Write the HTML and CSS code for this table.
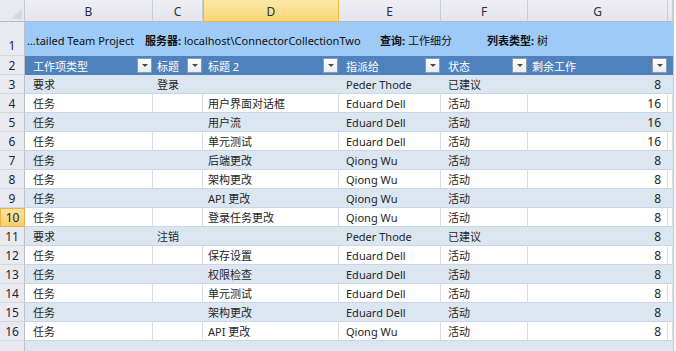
FILE: index.html
```html
<!DOCTYPE html>
<html>
<head>
<meta charset="utf-8">
<link rel="stylesheet" href="styles.css">
</head>
<body>
<div class="sheet">
  <div class="row colhdr">
    <div class="corner"><span class="tri"></span></div>
    <div class="ch">B</div>
    <div class="ch">C</div>
    <div class="ch sel">D</div>
    <div class="ch">E</div>
    <div class="ch">F</div>
    <div class="ch">G</div>
    <div class="ch"></div>
    <div class="edge"></div>
  </div>

  <div class="row r1">
    <div class="rh rh1">1</div>
    <div class="banner">
      <span>…tailed Team Project</span>
      <span><b>服务器:</b> localhost\ConnectorCollectionTwo</span>
      <span><b>查询:</b> 工作细分</span>
      <span><b>列表类型:</b> 树</span>
    </div>
    <div class="edge"></div>
  </div>

  <div class="row r2">
    <div class="rh">2</div>
    <div class="th pb">工作项类型<span class="dd"></span></div>
    <div class="th pc">标题<span class="dd"></span></div>
    <div class="th pd">标题 2<span class="dd"></span></div>
    <div class="th pe">指派给<span class="dd"></span></div>
    <div class="th pf">状态<span class="dd"></span></div>
    <div class="th pg">剩余工作<span class="dd"></span></div>
    <div class="th"></div>
    <div class="edge"></div>
  </div>

  <div class="row data band">
    <div class="rh">3</div><div class="td pb">要求</div><div class="td pc over">登录</div><div class="td pd"></div><div class="td pe">Peder Thode</div><div class="td pf">已建议</div><div class="td num">8</div><div class="td"></div><div class="edge"></div>
  </div>
  <div class="row data">
    <div class="rh">4</div><div class="td pb">任务</div><div class="td pc"></div><div class="td pd">用户界面对话框</div><div class="td pe">Eduard Dell</div><div class="td pf">活动</div><div class="td num">16</div><div class="td"></div><div class="edge"></div>
  </div>
  <div class="row data band">
    <div class="rh">5</div><div class="td pb">任务</div><div class="td pc"></div><div class="td pd">用户流</div><div class="td pe">Eduard Dell</div><div class="td pf">活动</div><div class="td num">16</div><div class="td"></div><div class="edge"></div>
  </div>
  <div class="row data">
    <div class="rh">6</div><div class="td pb">任务</div><div class="td pc"></div><div class="td pd">单元测试</div><div class="td pe">Eduard Dell</div><div class="td pf">活动</div><div class="td num">16</div><div class="td"></div><div class="edge"></div>
  </div>
  <div class="row data band">
    <div class="rh">7</div><div class="td pb">任务</div><div class="td pc"></div><div class="td pd">后端更改</div><div class="td pe">Qiong Wu</div><div class="td pf">活动</div><div class="td num">8</div><div class="td"></div><div class="edge"></div>
  </div>
  <div class="row data">
    <div class="rh">8</div><div class="td pb">任务</div><div class="td pc"></div><div class="td pd">架构更改</div><div class="td pe">Qiong Wu</div><div class="td pf">活动</div><div class="td num">8</div><div class="td"></div><div class="edge"></div>
  </div>
  <div class="row data band">
    <div class="rh">9</div><div class="td pb">任务</div><div class="td pc"></div><div class="td pd">API 更改</div><div class="td pe">Qiong Wu</div><div class="td pf">活动</div><div class="td num">8</div><div class="td"></div><div class="edge"></div>
  </div>
  <div class="row data">
    <div class="rh rsel">10</div><div class="td pb">任务</div><div class="td pc"></div><div class="td pd">登录任务更改</div><div class="td pe">Qiong Wu</div><div class="td pf">活动</div><div class="td num">8</div><div class="td"></div><div class="edge"></div>
  </div>
  <div class="row data band">
    <div class="rh">11</div><div class="td pb">要求</div><div class="td pc over">注销</div><div class="td pd"></div><div class="td pe">Peder Thode</div><div class="td pf">已建议</div><div class="td num">8</div><div class="td"></div><div class="edge"></div>
  </div>
  <div class="row data">
    <div class="rh">12</div><div class="td pb">任务</div><div class="td pc"></div><div class="td pd">保存设置</div><div class="td pe">Eduard Dell</div><div class="td pf">活动</div><div class="td num">8</div><div class="td"></div><div class="edge"></div>
  </div>
  <div class="row data band">
    <div class="rh">13</div><div class="td pb">任务</div><div class="td pc"></div><div class="td pd">权限检查</div><div class="td pe">Eduard Dell</div><div class="td pf">活动</div><div class="td num">8</div><div class="td"></div><div class="edge"></div>
  </div>
  <div class="row data">
    <div class="rh">14</div><div class="td pb">任务</div><div class="td pc"></div><div class="td pd">单元测试</div><div class="td pe">Eduard Dell</div><div class="td pf">活动</div><div class="td num">8</div><div class="td"></div><div class="edge"></div>
  </div>
  <div class="row data band">
    <div class="rh">15</div><div class="td pb">任务</div><div class="td pc"></div><div class="td pd">架构更改</div><div class="td pe">Eduard Dell</div><div class="td pf">活动</div><div class="td num">8</div><div class="td"></div><div class="edge"></div>
  </div>
  <div class="row data">
    <div class="rh">16</div><div class="td pb">任务</div><div class="td pc"></div><div class="td pd">API 更改</div><div class="td pe">Qiong Wu</div><div class="td pf">活动</div><div class="td num">8</div><div class="td"></div><div class="edge"></div>
  </div>
  <div class="row data band last">
    <div class="rh"></div><div class="td"></div><div class="td"></div><div class="td"></div><div class="td"></div><div class="td"></div><div class="td"></div><div class="td"></div><div class="edge"></div>
  </div>
</div>
</body>
</html>
```

FILE: styles.css
```css
html, body {
  margin: 0;
  padding: 0;
  background: #ffffff;
}

.sheet {
  width: 676px;
  height: 351px;
  overflow: hidden;
  font-family: "Noto Sans", "Noto Sans CJK SC", sans-serif;
  font-size: 11px;
  color: #262626;
}

.row {
  display: grid;
  grid-template-columns: 25px 128px 50px 136px 102px 87px 140px 5px 3px;
}

/* column header */
.colhdr {
  height: 22px;
}
.corner {
  position: relative;
  background: #e9eaf0;
  border-right: 1px solid #c2c7d0;
  border-bottom: 1px solid #b4bac4;
  box-sizing: border-box;
}
.tri {
  position: absolute;
  right: 2px;
  bottom: 2px;
  width: 0;
  height: 0;
  border-left: 11px solid transparent;
  border-bottom: 11px solid #d5d9df;
}
.ch {
  display: flex;
  align-items: center;
  justify-content: center;
  padding-top: 1px;
  background: linear-gradient(#eeeef3, #e5e6ed);
  border-right: 1px solid #c8ccd4;
  border-bottom: 1px solid #b4bac4;
  box-sizing: border-box;
  font-size: 12px;
  color: #27313f;
}
.ch.sel {
  background: linear-gradient(#fbe7a6, #f8d675);
  border: 1px solid #f1b54a;
  border-top: none;
}
.edge {
  background: #f7f7f7;
  border-left: 1px solid #c9ccd2;
  box-sizing: border-box;
}

/* row header */
.rh {
  display: flex;
  align-items: center;
  justify-content: center;
  background: #e9eaf0;
  border-right: 1px solid #b9c0ca;
  border-bottom: 1px solid #d3d6dc;
  box-sizing: border-box;
  font-size: 12px;
  color: #1e2633;
}
.rh1 {
  align-items: flex-end;
  padding-bottom: 1px;
}
.rh.rsel {
  background: linear-gradient(#fbe3a0, #f7cf6a);
  border: 1px solid #f0b044;
}

/* row 1 banner */
.r1 {
  height: 34px;
}
.banner {
  grid-column: 2 / 9;
  display: grid;
  grid-template-columns: 118px 235px 107px auto;
  align-items: center;
  padding-left: 2px;
  padding-top: 2px;
  background: #9ecaf7;
  font-size: 11px;
  color: #111;
  white-space: nowrap;
}
.banner b {
  font-weight: 700;
}

/* row 2 table header */
.r2 {
  height: 19px;
}
.th {
  display: flex;
  align-items: center;
  justify-content: space-between;
  background: #4f81bd;
  color: #ffffff;
  white-space: nowrap;
}
.dd {
  position: relative;
  width: 15px;
  height: 15px;
  margin-right: 1px;
  box-sizing: border-box;
  background: linear-gradient(#ffffff, #e9ebee);
  border: 1px solid #8f9caf;
}
.dd::after {
  content: "";
  position: absolute;
  left: 4px;
  top: 5px;
  border-left: 3px solid transparent;
  border-right: 3px solid transparent;
  border-top: 3px solid #4a4a4a;
}

/* padding per column */
.pb { padding-left: 8px; }
.pc { padding-left: 4px; }
.pd { padding-left: 5px; }
.pe { padding-left: 7px; }
.pf { padding-left: 7px; }
.pg { padding-left: 4px; }

/* data rows */
.data {
  height: 19px;
}
.td {
  display: flex;
  align-items: center;
  background: #ffffff;
  border-right: 1px solid #d7dde6;
  border-bottom: 1px solid #cad6e8;
  box-sizing: border-box;
  white-space: nowrap;
}
.band .td {
  background: #dce6f1;
  border-right-color: #dce6f1;
}
.td.over {
  overflow: visible;
  border-right-color: transparent;
}
.num {
  justify-content: flex-end;
  padding-right: 6px;
  font-family: "Noto Sans", sans-serif;
  font-size: 12px;
}
.last {
  height: 10px;
}
.last .td {
  border-bottom: none;
}
.last .rh {
  border-bottom: none;
}
```
